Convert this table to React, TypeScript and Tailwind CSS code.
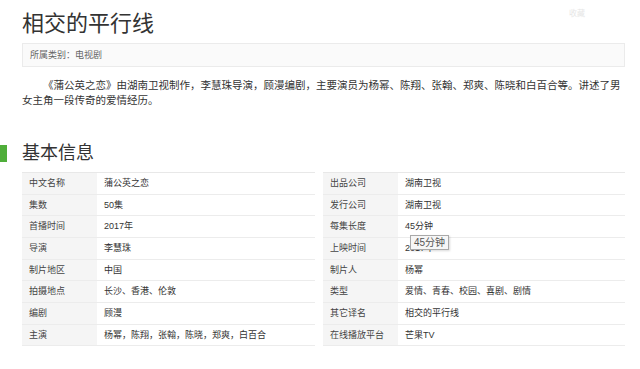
import React from "react";

const leftRows: [string, string][] = [
  ["中文名称", "蒲公英之恋"],
  ["集数", "50集"],
  ["首播时间", "2017年"],
  ["导演", "李慧珠"],
  ["制片地区", "中国"],
  ["拍摄地点", "长沙、香港、伦敦"],
  ["编剧", "顾漫"],
  ["主演", "杨幂，陈翔，张翰，陈晓，郑爽，白百合"],
];

const rightRows: [string, string][] = [
  ["出品公司", "湖南卫视"],
  ["发行公司", "湖南卫视"],
  ["每集长度", "45分钟"],
  ["上映时间", "2017年"],
  ["制片人", "杨幂"],
  ["类型", "爱情、青春、校园、喜剧、剧情"],
  ["其它译名", "相交的平行线"],
  ["在线播放平台", "芒果TV"],
];

function InfoBlock({ rows, width, pad }: { rows: [string, string][]; width: string; pad: string }) {
  return (
    <div className={`${width} border-t border-[#e8e8e8]`}>
      {rows.map(([k, v]) => (
        <div key={k} className="flex h-[21.67px] border-b border-[#ececec] text-[9px] leading-[20.67px]">
          <div className={`w-[75px] shrink-0 bg-[#f5f5f5] text-[#444] ${pad}`}>{k}</div>
          <div className={`flex-1 text-[#333] ${pad} whitespace-nowrap`}>{v}</div>
        </div>
      ))}
    </div>
  );
}

export default function App() {
  return (
    <div
      className="relative w-[640px] h-[369px] bg-white overflow-hidden text-[#333]"
      style={{ fontFamily: '"Liberation Sans", "Noto Sans CJK SC", sans-serif' }}
    >
      <div className="pl-[22px] pr-[13px]">
        {/* title */}
        <div className="flex justify-between items-start pt-[12px]">
          <h1 className="text-[22px] leading-[24px] font-normal text-[#333]">相交的平行线</h1>
          <span className="mr-[42px] mt-[-4px] text-[8px] text-[#e6e6e6]">收藏</span>
        </div>

        {/* category bar */}
        <div className="mt-[7px] mr-[2px] h-[24px] border border-[#ebebeb] bg-[#fafafa] px-[7px] text-[9px] leading-[22px] text-[#666]">
          所属类别：电视剧
        </div>

        {/* summary */}
        <p className="mt-[11px] text-[10.5px] leading-[15px] indent-[2em] text-[#333]">
          《蒲公英之恋》由湖南卫视制作，李慧珠导演，顾漫编剧，主要演员为杨幂、陈翔、张翰、郑爽、陈晓和白百合等。讲述了男女主角一段传奇的爱情经历。
        </p>

        {/* section header */}
        <div className="-ml-[22px] mt-[36px] flex items-center h-[18px]">
          <div className="w-[7px] h-[17px] bg-[#4fae3a]" />
          <h2 className="ml-[15px] text-[18px] leading-[18px] font-normal text-[#333]">基本信息</h2>
        </div>

        {/* basic info */}
        <div className="mt-[10px] flex gap-[8px]">
          <InfoBlock rows={leftRows} width="w-[293px]" pad="pl-[7px]" />
          <InfoBlock rows={rightRows} width="w-[302px]" pad="pl-[7px]" />
        </div>
      </div>

      {/* hover tooltip */}
      <div className="absolute left-[410px] top-[235px] h-[15px] px-[3px] border border-[#a9a9a9] bg-[#f6f6f6] text-[10px] leading-[13px] text-[#555] shadow-[1px_1px_2px_rgba(0,0,0,0.15)]">
        45分钟
      </div>
    </div>
  );
}
